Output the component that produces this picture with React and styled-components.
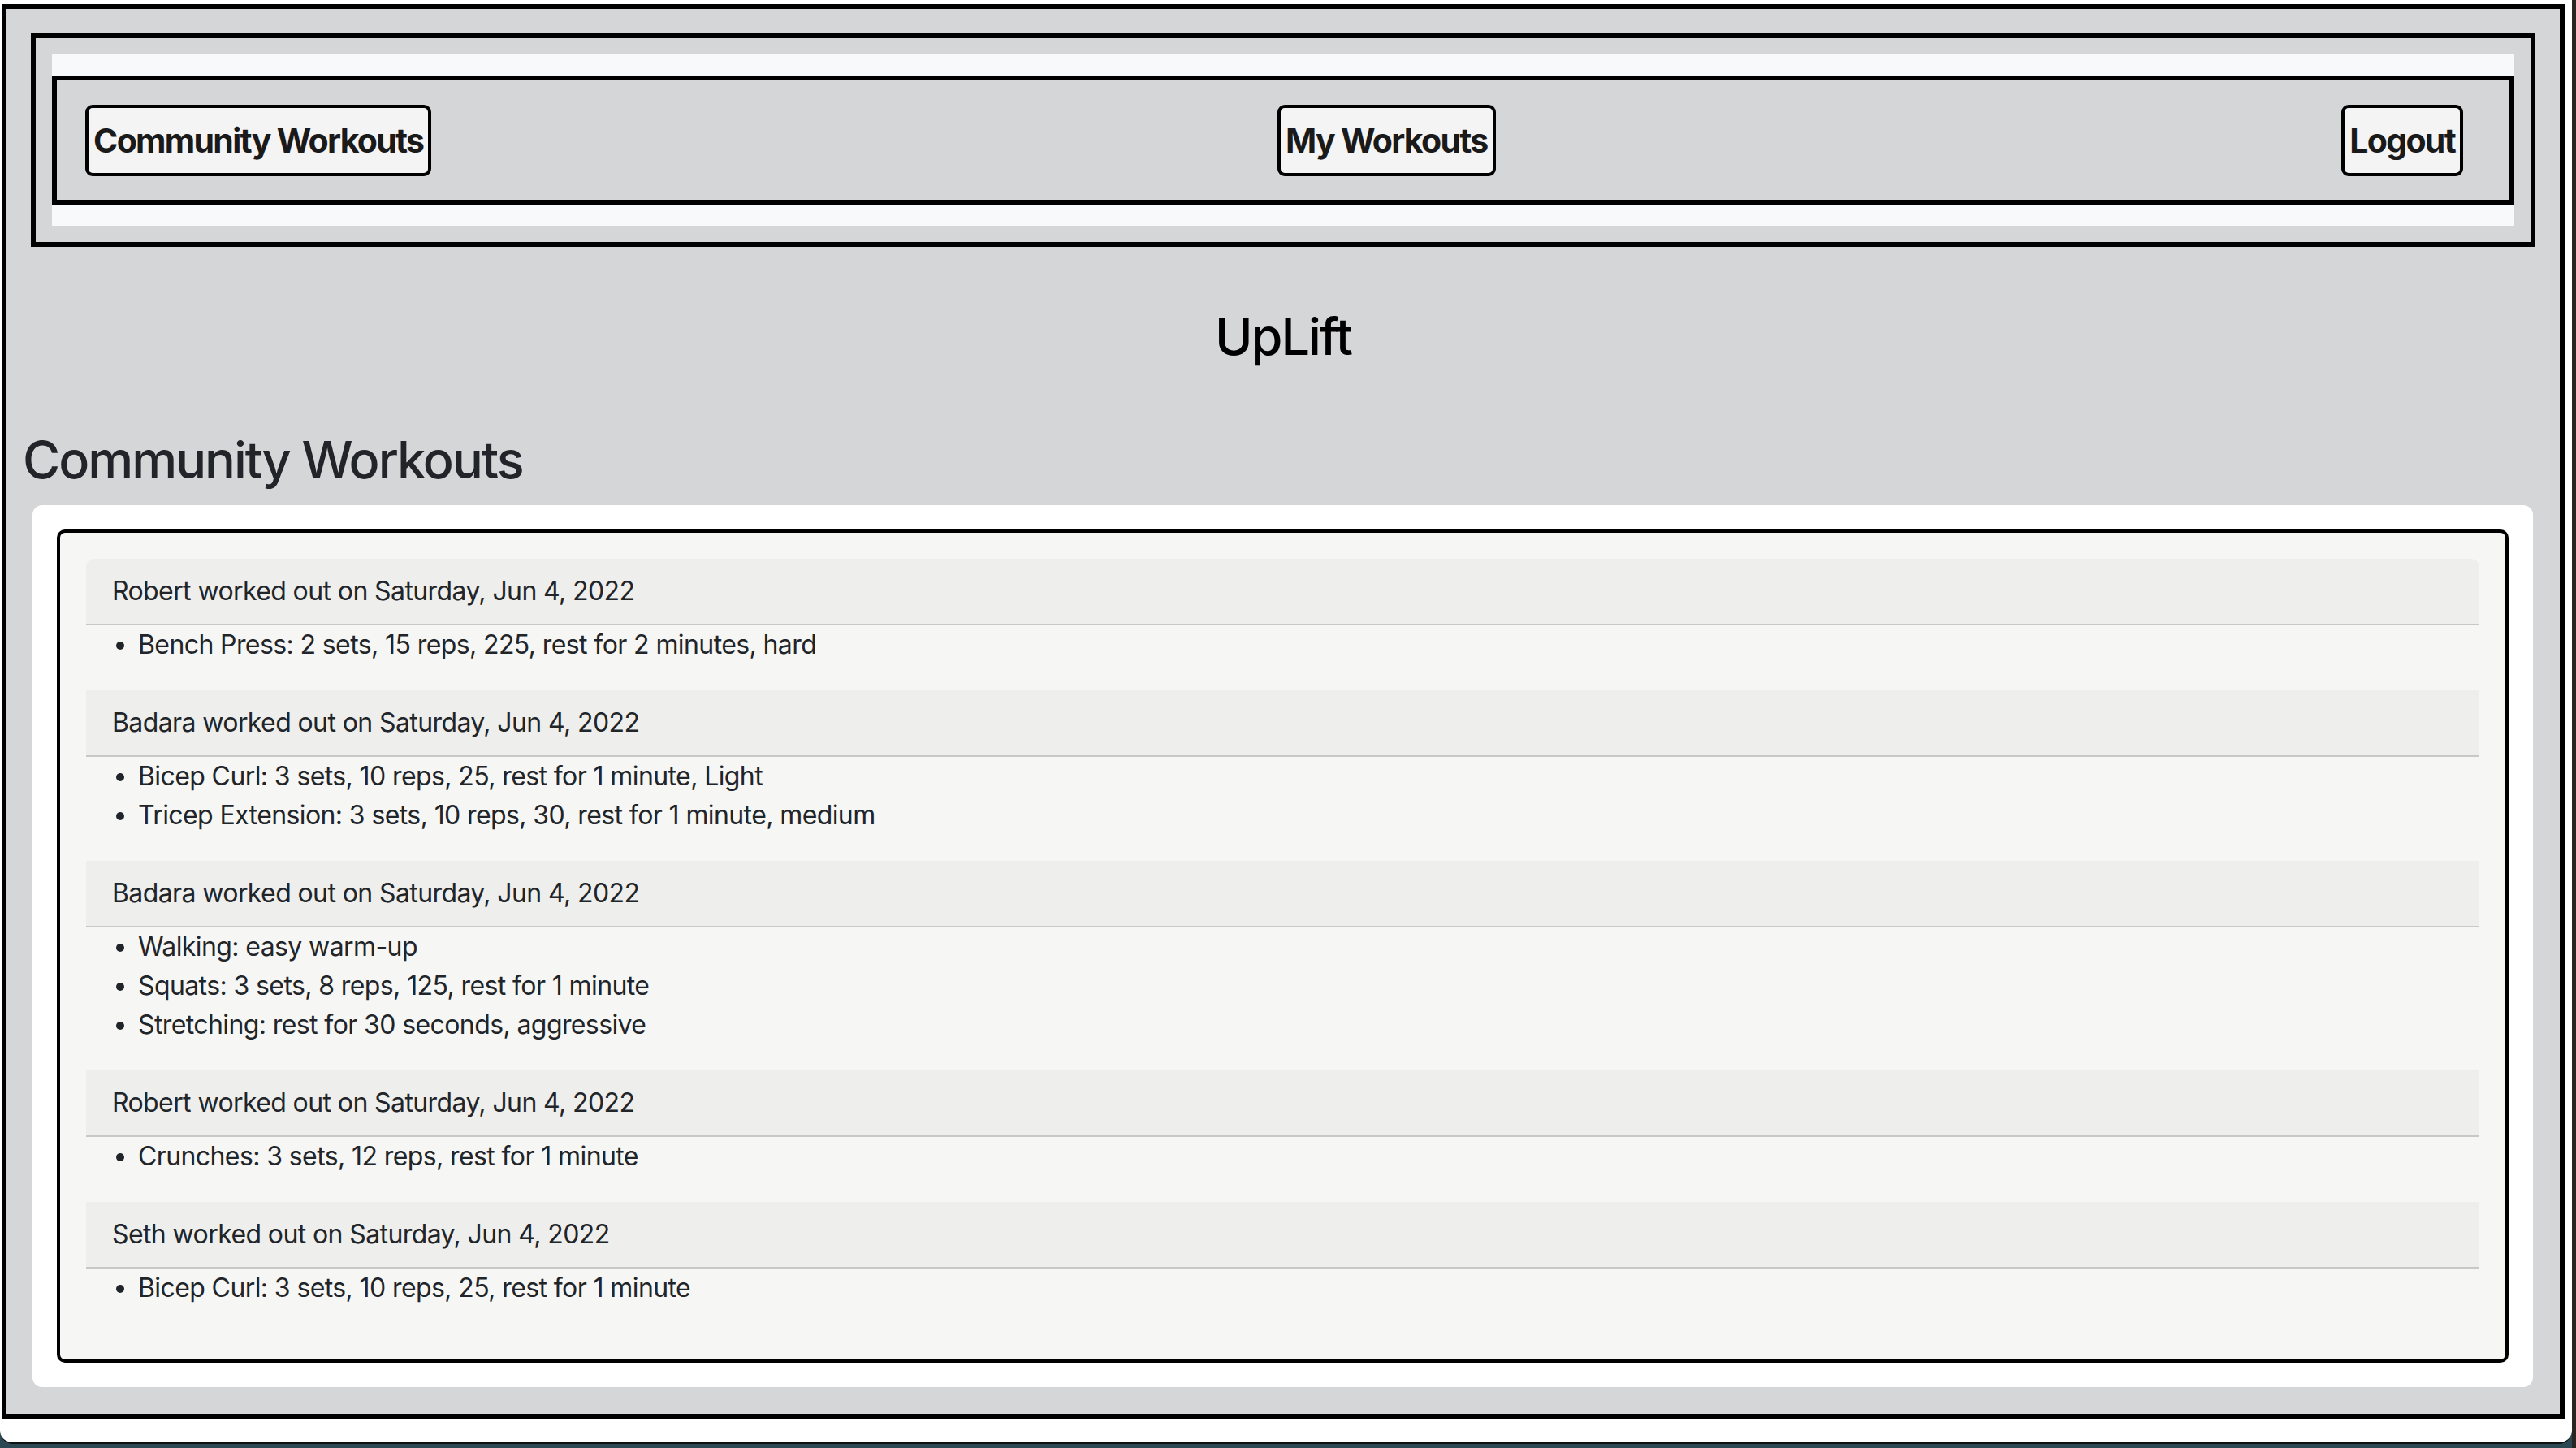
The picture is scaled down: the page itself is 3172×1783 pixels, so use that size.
import React from "react";
import styled, { createGlobalStyle } from "styled-components";

const GlobalStyle = createGlobalStyle`
  html, body {
    margin: 0;
    padding: 0;
  }
  body {
    font-family: Inter, "Noto Sans", sans-serif;
    color: #212529;
    background: #2c4853;
  }
  * {
    box-sizing: border-box;
  }
`;

const Desktop = styled.div`
  display: grid;
  grid-template-columns: 3167px 1fr;
  grid-template-rows: 1778px 1fr;
  width: 3172px;
  height: 1783px;
  overflow: hidden;
`;

const Window = styled.div`
  grid-column: 1;
  grid-row: 1;
  background: #fff;
  border-radius: 0 0 16px 16px;
  border-bottom: 2px solid #111;
  padding: 5px 9px 0 2px;
`;

const DesktopSide = styled.div`
  grid-column: 2;
  grid-row: 1 / span 2;
  background: #2a2521;
`;

const AppFrame = styled.div`
  display: flex;
  flex-direction: column;
  border: 6px solid #000;
  background: #d5d6d8;
  padding-bottom: 33px;
`;

const NavOuter = styled.div`
  margin: 30px;
  border: 6px solid #000;
  padding: 20px;
`;

const NavStrip = styled.div`
  background: #f8f9fa;
  padding: 26px 0;
`;

const NavBar = styled.nav`
  display: flex;
  align-items: center;
  justify-content: space-between;
  height: 159px;
  border: 6px solid #000;
  background: #d5d6d8;
  padding: 0 57px 0 35px;
`;

const NavButton = styled.button`
  font-family: Inter, "Noto Sans", sans-serif;
  font-weight: 700;
  font-size: 41px;
  letter-spacing: -1.7px;
  line-height: 48px;
  color: #1a1a1a;
  background: #f5f4f5;
  border: 4px solid #000;
  border-radius: 9px;
  padding: 16px 6px;
  cursor: pointer;
`;

const Title = styled.h1`
  margin: 43px 0 0;
  text-align: center;
  font-size: 63px;
  letter-spacing: -2px;
  font-weight: 500;
  line-height: 1.2;
  color: #000;
`;

const SectionHeading = styled.h2`
  margin: 76px 0 18px 20px;
  font-size: 63px;
  letter-spacing: -2px;
  font-weight: 500;
  line-height: 1.2;
  color: #212529;
`;

const Card = styled.div`
  margin: 0 33px 0 32px;
  padding: 30px;
  background: #fff;
  border-radius: 12px;
`;

const FeedBox = styled.div`
  border: 4px solid #000;
  border-radius: 10px;
  background: #f6f6f4;
  padding: 32px;
`;

const EntryHeader = styled.div`
  background: #eeeeec;
  border-bottom: 2px solid #c8c8c8;
  border-radius: ${(p) => (p.$first ? "10px 10px 0 0" : "0")};
  padding: 16px 32px;
  font-size: 32px;
  letter-spacing: -0.6px;
  line-height: 48px;
`;

const ExerciseList = styled.ul`
  margin: 0 0 32px;
  padding-left: 64px;
  font-size: 32px;
  letter-spacing: -0.6px;
  line-height: 48px;
`;

const workouts = [
  {
    user: "Robert",
    exercises: ["Bench Press: 2 sets, 15 reps, 225, rest for 2 minutes, hard"],
  },
  {
    user: "Badara",
    exercises: [
      "Bicep Curl: 3 sets, 10 reps, 25, rest for 1 minute, Light",
      "Tricep Extension: 3 sets, 10 reps, 30, rest for 1 minute, medium",
    ],
  },
  {
    user: "Badara",
    exercises: [
      "Walking: easy warm-up",
      "Squats: 3 sets, 8 reps, 125, rest for 1 minute",
      "Stretching: rest for 30 seconds, aggressive",
    ],
  },
  {
    user: "Robert",
    exercises: ["Crunches: 3 sets, 12 reps, rest for 1 minute"],
  },
  {
    user: "Seth",
    exercises: ["Bicep Curl: 3 sets, 10 reps, 25, rest for 1 minute"],
  },
];

function WorkoutEntry({ workout, first }) {
  return (
    <>
      <EntryHeader $first={first}>
        {workout.user} worked out on Saturday, Jun 4, 2022
      </EntryHeader>
      <ExerciseList>
        {workout.exercises.map((ex, i) => (
          <li key={i}>{ex}</li>
        ))}
      </ExerciseList>
    </>
  );
}

export default function App() {
  return (
    <>
      <GlobalStyle />
      <Desktop>
        <Window>
          <AppFrame>
            <NavOuter>
              <NavStrip>
                <NavBar>
                  <NavButton>Community Workouts</NavButton>
                  <NavButton>My Workouts</NavButton>
                  <NavButton>Logout</NavButton>
                </NavBar>
              </NavStrip>
            </NavOuter>
            <Title>UpLift</Title>
            <SectionHeading>Community Workouts</SectionHeading>
            <Card>
              <FeedBox>
                {workouts.map((w, i) => (
                  <WorkoutEntry key={i} workout={w} first={i === 0} />
                ))}
              </FeedBox>
            </Card>
          </AppFrame>
        </Window>
        <DesktopSide />
      </Desktop>
    </>
  );
}
